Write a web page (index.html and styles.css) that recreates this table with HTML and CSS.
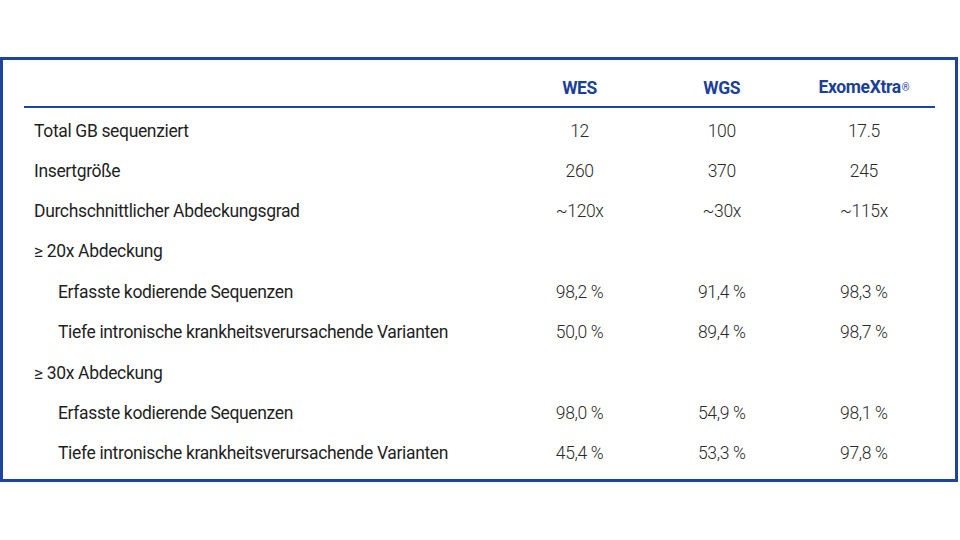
FILE: index.html
```html
<!DOCTYPE html>
<html lang="de">
<head>
<meta charset="utf-8">
<link rel="stylesheet" href="styles.css">
</head>
<body>
<div class="frame">
  <table class="stats">
    <colgroup>
      <col class="c-label"><col class="c-val"><col class="c-val"><col class="c-val">
    </colgroup>
    <thead>
      <tr>
        <th></th>
        <th>WES</th>
        <th>WGS</th>
        <th>ExomeXtra<span class="reg">®</span></th>
      </tr>
    </thead>
    <tbody>
      <tr><td class="lbl">Total GB sequenziert</td><td>12</td><td>100</td><td>17.5</td></tr>
      <tr><td class="lbl">Insertgröße</td><td>260</td><td>370</td><td>245</td></tr>
      <tr><td class="lbl">Durchschnittlicher Abdeckungsgrad</td><td>~120x</td><td>~30x</td><td>~115x</td></tr>
      <tr><td class="lbl">≥ 20x Abdeckung</td><td></td><td></td><td></td></tr>
      <tr><td class="lbl sub">Erfasste kodierende Sequenzen</td><td>98,2 %</td><td>91,4 %</td><td>98,3 %</td></tr>
      <tr><td class="lbl sub">Tiefe intronische krankheitsverursachende Varianten</td><td>50,0 %</td><td>89,4 %</td><td>98,7 %</td></tr>
      <tr><td class="lbl">≥ 30x Abdeckung</td><td></td><td></td><td></td></tr>
      <tr><td class="lbl sub">Erfasste kodierende Sequenzen</td><td>98,0 %</td><td>54,9 %</td><td>98,1 %</td></tr>
      <tr><td class="lbl sub">Tiefe intronische krankheitsverursachende Varianten</td><td>45,4 %</td><td>53,3 %</td><td>97,8 %</td></tr>
    </tbody>
  </table>
</div>
</body>
</html>
```
FILE: styles.css
```css
html, body {
  margin: 0;
  padding: 0;
  background: #ffffff;
}
body {
  font-family: Roboto, "Liberation Sans", sans-serif;
  color: #222222;
}
.frame {
  box-sizing: border-box;
  margin-top: 57px;
  width: 958px;
  height: 425px;
  border: 3px solid #1d45a0;
  padding: 0 0 0 21px;
}
.stats {
  border-collapse: collapse;
  table-layout: fixed;
  width: 911px;
}
.c-label { width: 484px; }
.c-val { width: 142px; }
.stats th {
  box-sizing: border-box;
  height: 47px;
  padding: 0 0 8px 0;
  vertical-align: bottom;
  color: #1c3f97;
  font-weight: 700;
  font-size: 17.5px;
  line-height: 20px;
  letter-spacing: -0.35px;
  border-bottom: 2px solid #1d45a0;
}
.reg {
  font-size: 10px;
  vertical-align: 2px;
  font-weight: 400;
  margin-left: 1px;
}
.stats td {
  box-sizing: border-box;
  height: 40.4px;
  padding: 6px 0 0 0;
  text-align: center;
  font-size: 17.5px;
  font-weight: 300;
  color: #2a2a2a;
  letter-spacing: -0.35px;
}
.stats td.lbl {
  text-align: left;
  padding-left: 10px;
  font-weight: 400;
  color: #1f1f1f;
}
.stats td.sub {
  padding-left: 34px;
}
```
